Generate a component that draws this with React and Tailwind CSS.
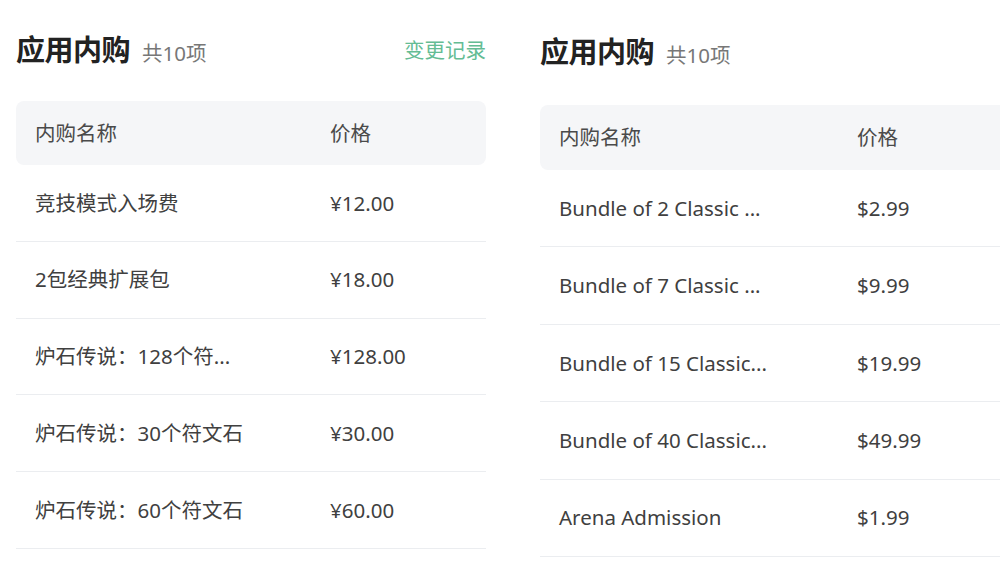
import React from 'react';

const cnRows = [
  { name: '竞技模式入场费', price: '¥12.00' },
  { name: '2包经典扩展包', price: '¥18.00' },
  { name: '炉石传说：128个符...', price: '¥128.00' },
  { name: '炉石传说：30个符文石', price: '¥30.00' },
  { name: '炉石传说：60个符文石', price: '¥60.00' },
];

const enRows = [
  { name: 'Bundle of 2 Classic ...', price: '$2.99' },
  { name: 'Bundle of 7 Classic ...', price: '$9.99' },
  { name: 'Bundle of 15 Classic...', price: '$19.99' },
  { name: 'Bundle of 40 Classic...', price: '$49.99' },
  { name: 'Arena Admission', price: '$1.99' },
];

const font = { fontFamily: '"Noto Sans", "Noto Sans CJK SC", sans-serif' };

const Panel = ({ rows, showLink, headerH, rowH, priceCol, gap }) => (
  <div className="flex flex-col">
    <div className="flex items-center justify-between h-9">
      <div className="flex items-baseline">
        <h2 className="text-[29px] font-bold text-[#222] tracking-[-0.5px]">应用内购</h2>
        <span className="ml-3 text-[20.5px] text-[#777]">共10项</span>
      </div>
      {showLink && <span className="text-[20.5px] text-[#64bc94]">变更记录</span>}
    </div>

    <div className={gap} />

    {/* Table header */}
    <div className={`flex items-center bg-[#f5f6f8] rounded-lg px-[19px] ${headerH}`}>
      <span className={`text-[20.5px] text-[#4a4a4a] ${priceCol}`}>内购名称</span>
      <span className="text-[20.5px] text-[#4a4a4a]">价格</span>
    </div>

    {/* Rows */}
    {rows.map((row) => (
      <div key={row.name} className={`flex items-center px-[19px] border-b border-[#ebedf0] ${rowH}`}>
        <span className={`text-[20.5px] text-[#404040] whitespace-nowrap ${priceCol}`}>{row.name}</span>
        <span className="text-[20.5px] text-[#404040]">{row.price}</span>
      </div>
    ))}
  </div>
);

export default function App() {
  return (
    <div className="w-[1000px] h-[563px] overflow-hidden bg-white flex" style={font}>
      <div className="w-[470px] shrink-0 ml-4 pt-[32px]">
        <Panel rows={cnRows} showLink headerH="h-[64px]" rowH="h-[76.75px]" priceCol="w-[295px] shrink-0" gap="h-[33px]" />
      </div>
      <div className="w-[490px] shrink-0 ml-[54px] pt-[34px]">
        <Panel rows={enRows} headerH="h-[65px]" rowH="h-[77.4px]" priceCol="w-[298px] shrink-0" gap="h-[35px]" />
      </div>
    </div>
  );
}
